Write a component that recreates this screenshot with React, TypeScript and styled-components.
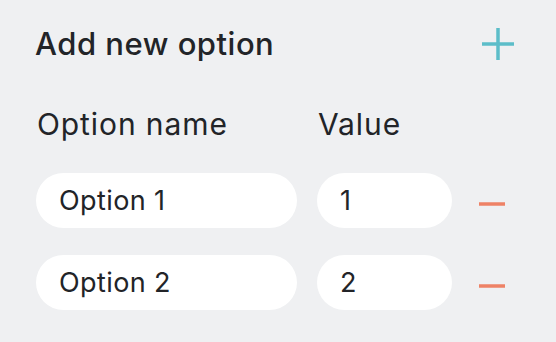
import styled, { createGlobalStyle } from "styled-components";

const GlobalStyle = createGlobalStyle`
    html, body {
        margin: 0;
        padding: 0;
        background-color: #eff0f2;
    }
    body {
        font-family: Inter, "Noto Sans", sans-serif;
        color: #222428;
    }
`;

const options = [
    { name: "Option 1", value: "1" },
    { name: "Option 2", value: "2" },
];

const App = () => {
    return (
        <>
            <GlobalStyle />
            <Panel>
                <Header>
                    <Title>Add new option</Title>
                    <IconButton aria-label="Add option">
                        <svg width="32" height="32" viewBox="0 0 32 32">
                            <path d="M16 0v32M0 16h32" stroke="#5cbdc9" strokeWidth="3.5" />
                        </svg>
                    </IconButton>
                </Header>
                <Grid>
                    <Label>Option name</Label>
                    <Label>Value</Label>
                    <span />
                    {options.map((o) => (
                        <Row key={o.name}>
                            <Field readOnly defaultValue={o.name} />
                            <Field readOnly defaultValue={o.value} />
                            <RemoveButton aria-label="Remove option">
                                <svg width="26" height="4" viewBox="0 0 26 4">
                                    <path d="M0 2h26" stroke="#ee8266" strokeWidth="3.5" />
                                </svg>
                            </RemoveButton>
                        </Row>
                    ))}
                </Grid>
            </Panel>
        </>
    );
};

const Panel = styled.div`
    padding: 28px 42px 0 36px;
`;

const Header = styled.div`
    display: flex;
    justify-content: space-between;
    align-items: center;
    height: 32px;
`;

const Title = styled.h2`
    margin: 0 0 0 -1px;
    font-size: 31px;
    line-height: 32px;
    font-weight: 550;
    letter-spacing: 0.5px;
`;

const IconButton = styled.button`
    display: flex;
    align-items: center;
    justify-content: center;
    padding: 0;
    border: none;
    background: none;
    cursor: pointer;
    flex-shrink: 0;
`;

const RemoveButton = styled(IconButton)`
    justify-content: flex-end;
    padding-top: 7px;
    svg {
        flex-shrink: 0;
    }
`;

const Grid = styled.div`
    display: grid;
    grid-template-columns: 261px 135px 33px;
    column-gap: 20px;
    row-gap: 27px;
    margin-top: 50px;
    & > span {
        display: block;
    }
`;

const Row = styled.div`
    display: contents;
`;

const Label = styled.div`
    font-size: 30px;
    line-height: 29px;
    font-weight: 400;
    letter-spacing: 0.9px;
    margin-bottom: 7px;
    padding-left: 1px;
`;

const Field = styled.input`
    box-sizing: border-box;
    width: 100%;
    height: 55px;
    padding: 0 22px 0 23px;
    border: none;
    border-radius: 28px;
    background-color: #ffffff;
    font-family: Inter, "Noto Sans", sans-serif;
    font-size: 27px;
    letter-spacing: 0.4px;
    color: #222428;
    outline: none;
`;

export default App;
